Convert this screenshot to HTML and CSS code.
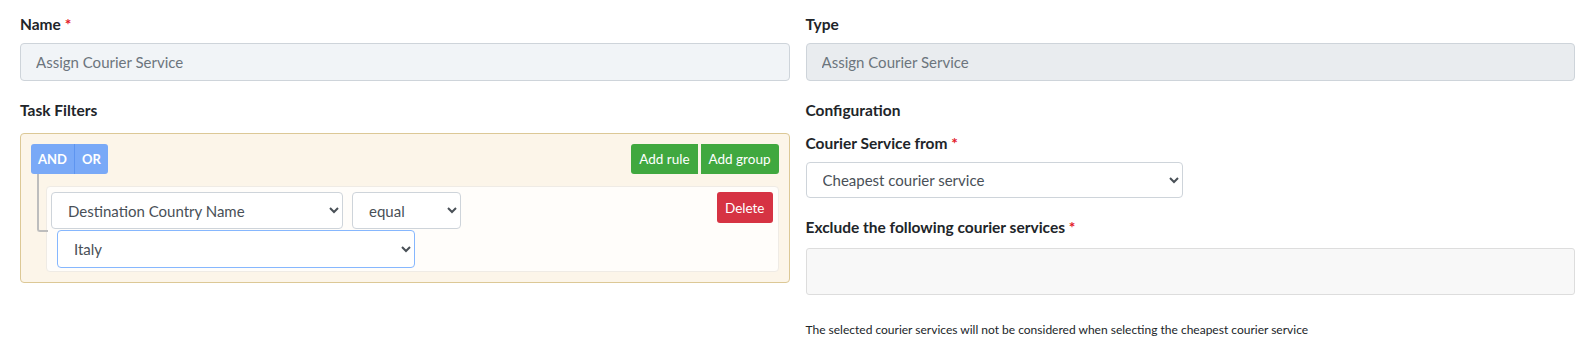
FILE: index.html
```html
<!DOCTYPE html>
<html lang="en">
<head>
    <meta charset="UTF-8">
    <title>Task</title>
    <link rel="stylesheet" href="styles.css">
</head>
<body>
    <form class="task-form">
        <div class="form-row">
            <div class="column">
                <div class="form-group">
                    <label>Name <span class="required">*</span></label>
                    <input type="text" class="form-control name-input" value="Assign Courier Service">
                </div>
                <div class="form-group">
                    <label>Task Filters</label>
                    <!-- Query builder -->
                    <div class="query-builder">
                        <div class="group-header">
                            <div class="btn-group">
                                <button type="button" class="btn btn-condition">AND</button>
                                <button type="button" class="btn btn-condition">OR</button>
                            </div>
                            <div class="btn-group">
                                <button type="button" class="btn btn-success">Add rule</button>
                                <button type="button" class="btn btn-success">Add group</button>
                            </div>
                        </div>
                        <div class="rules-list">
                            <div class="rule-container">
                                <div class="rule-header">
                                    <button type="button" class="btn btn-danger">Delete</button>
                                </div>
                                <div class="rule-filter">
                                    <select class="form-select field-select">
                                        <option>Destination Country Name</option>
                                    </select>
                                    <select class="form-select operator-select">
                                        <option>equal</option>
                                    </select>
                                </div>
                                <div class="rule-value">
                                    <select class="form-select value-select">
                                        <option>Italy</option>
                                    </select>
                                </div>
                            </div>
                        </div>
                    </div>
                </div>
            </div>
            <div class="column">
                <div class="form-group">
                    <label>Type</label>
                    <input type="text" class="form-control" value="Assign Courier Service" disabled>
                </div>
                <h4 class="section-title">Configuration</h4>
                <div class="form-group">
                    <label>Courier Service from <span class="required">*</span></label>
                    <select class="form-select courier-select">
                        <option>Cheapest courier service</option>
                    </select>
                </div>
                <div class="form-group">
                    <label class="exclude-label">Exclude the following courier services <span class="required">*</span></label>
                    <div class="multi-select"></div>
                    <small class="help-text">The selected courier services will not be considered when selecting the cheapest courier service</small>
                </div>
            </div>
        </div>
    </form>
</body>
</html>
```

FILE: styles.css
```css
body {
    font-family: Lato, "Noto Sans", sans-serif;
    background-color: #ffffff;
    color: #212529;
    margin: 0;
    padding: 0;
    font-size: 15px;
}
.task-form {
    padding: 13px 19px 0 20px;
}
.form-row {
    display: flex;
    gap: 16px;
}
.column {
    flex: 1;
    min-width: 0;
}
.form-group {
    margin-bottom: 18px;
}
label, .section-title {
    display: block;
    font-weight: 700;
    font-size: 15.5px;
    line-height: 22px;
    margin: 0 0 8px 0;
}
.section-title {
    margin-bottom: 11px;
}
.exclude-label {
    margin-bottom: 10px;
}
.required {
    color: #e3192a;
}
.form-control {
    display: block;
    width: 100%;
    box-sizing: border-box;
    height: 38px;
    padding: 0 15px;
    font-family: inherit;
    font-size: 15px;
    color: #6c757d;
    border: 1px solid #ced4da;
    border-radius: 4px;
    background-color: #e9ecef;
}
.name-input {
    background-color: #f1f4f7;
}
.form-select {
    box-sizing: border-box;
    height: 37px;
    padding: 0 10px 0 12px;
    font-family: inherit;
    font-size: 15px;
    color: #495057;
    background-color: #ffffff;
    border: 1px solid #ced4da;
    border-radius: 4px;
}
/* Query builder */
.query-builder {
    margin-top: 12px; /* collapses with the label margin */
    padding: 10px 10px 10px 10px;
    background-color: #fcf5e9;
    border: 1px solid #dcc896;
    border-radius: 4px;
}
.group-header {
    display: flex;
    justify-content: space-between;
}
.btn-group {
    display: flex;
}
.btn {
    height: 30px;
    border: none;
    font-family: inherit;
    font-size: 13.5px;
    color: #ffffff;
    padding: 0 8px;
    cursor: pointer;
}
.btn-group .btn:first-child {
    border-radius: 3px 0 0 3px;
}
.btn-group .btn:last-child {
    border-radius: 0 3px 3px 0;
}
.btn-condition {
    background-color: #79a9f7;
    font-weight: 700;
    font-size: 13px;
    padding: 0 7px;
}
.btn-condition + .btn-condition {
    border-left: 1px solid #5e95f0;
}
.btn-success {
    background-color: #40a83f;
}
.btn-success + .btn-success {
    margin-left: 3px;
}
.rules-list {
    padding: 12px 0 0 15px;
}
.rule-container {
    position: relative;
    padding: 5px 5px 3px 4px;
    background-color: #fffdfa;
    border: 1px solid #efebe5;
    border-radius: 4px;
}
/* connector from the condition buttons to the rule */
.rule-container::before {
    content: "";
    position: absolute;
    left: -10px;
    top: -13px;
    width: 9px;
    height: 56px;
    border-left: 2px solid #bdbdbd;
    border-bottom: 2px solid #bdbdbd;
    border-radius: 0 0 0 3px;
}
.rule-header {
    float: right;
}
.btn-danger {
    background-color: #d63343;
    border-radius: 3px;
    height: 31px;
    padding: 0 8px;
}
.rule-filter {
    display: flex;
    gap: 9px;
}
.field-select {
    width: 292px;
}
.operator-select {
    width: 109px;
}
.rule-value {
    padding: 1px 0 0 6px;
}
.value-select {
    width: 358px;
    height: 38px;
    border-color: #86b7fe;
}
/* Right column */
.courier-select {
    width: 377px;
    height: 36px;
}
.multi-select {
    height: 45px;
    background-color: #f8f8f8;
    border: 1px solid #dddddd;
    border-radius: 3px;
}
.help-text {
    display: block;
    margin-top: 27px;
    font-size: 12px;
    color: #212529;
}
```
